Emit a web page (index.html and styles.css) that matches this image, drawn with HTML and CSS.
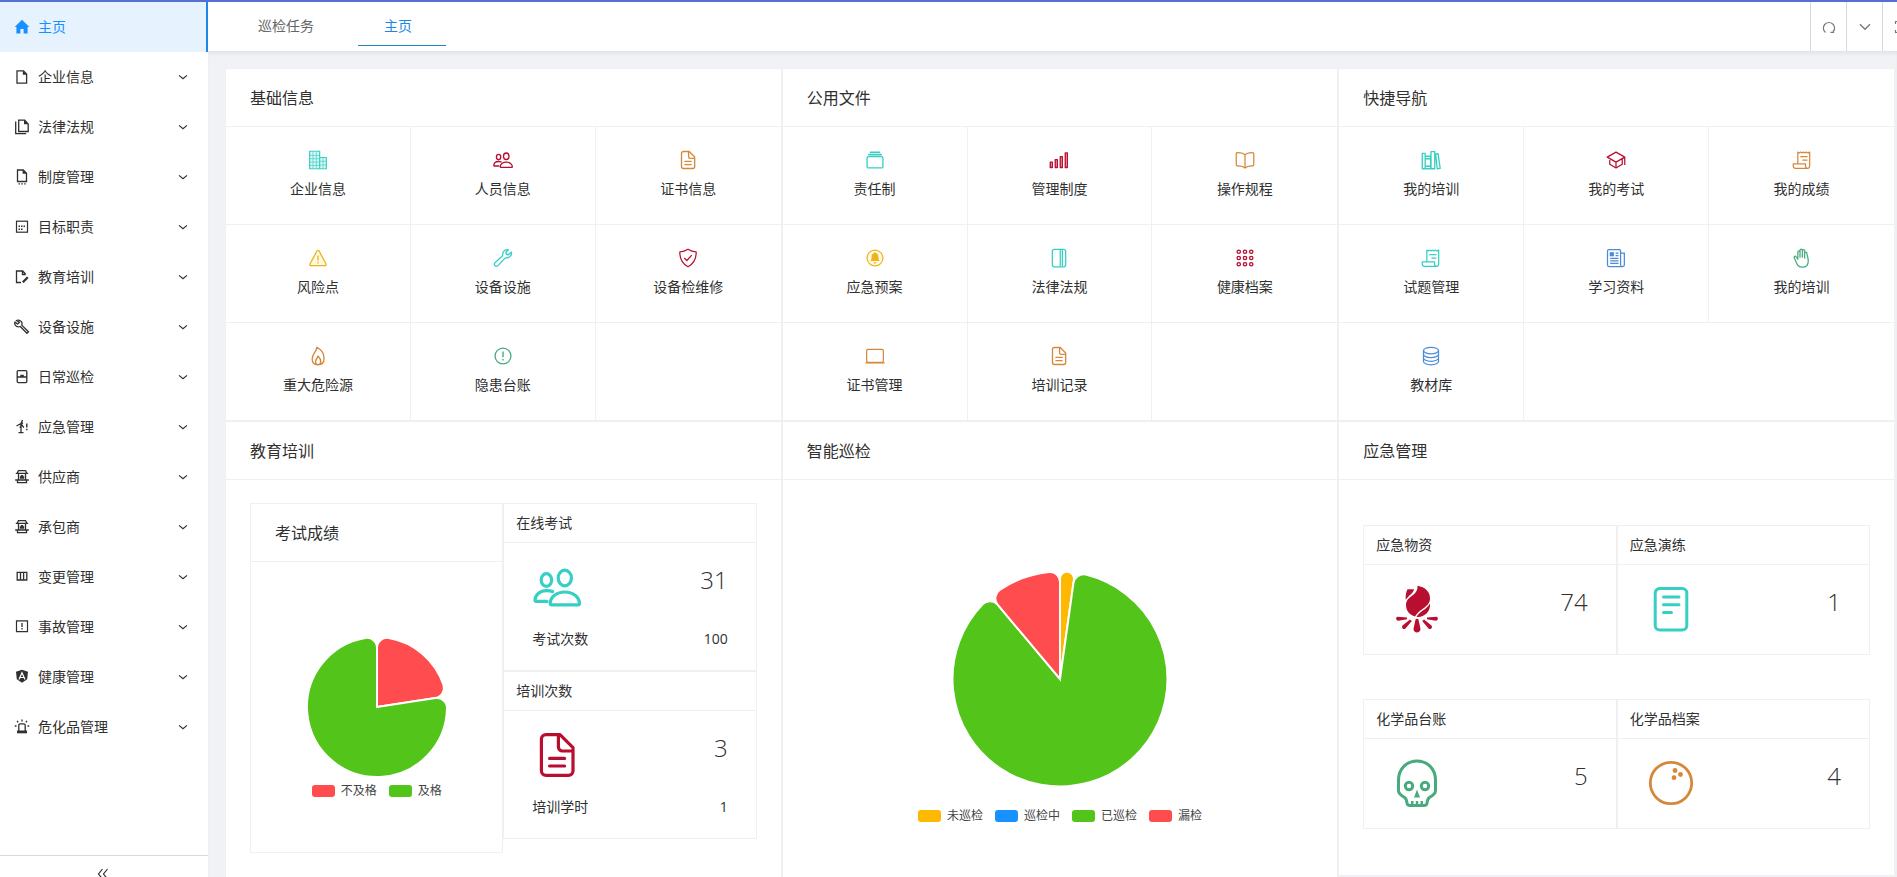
FILE: index.html
```html
<!DOCTYPE html>
<html lang="zh-CN">
<head>
<meta charset="utf-8">
<title>主页</title>
<link rel="stylesheet" href="styles.css">
</head>
<body>
<svg class="sprite" aria-hidden="true">
  <symbol id="chevron" viewBox="0 0 10 10"><path d="M1 3.400l4 3.400 4-3.400" fill="none" stroke="currentColor" stroke-width="1.200"/></symbol>
  <symbol id="file-text" viewBox="0 0 24 24"><path d="M13.500 1.800H6.500A2.300 2.300 0 0 0 4.200 4.100v15.800a2.300 2.300 0 0 0 2.300 2.300h11.200a2.300 2.300 0 0 0 2.300-2.300V8.300zM12.700 2v6a2 2 0 0 0 2 2H20M8.300 13.700h7.500M8.300 17.500h7.500" fill="none" stroke="currentColor" stroke-width="1.600" stroke-linecap="round" stroke-linejoin="round"/></symbol>
  <symbol id="people" viewBox="0 0 24 24"><g fill="none" stroke="currentColor" stroke-width="1.600" stroke-linecap="round" stroke-linejoin="round"><ellipse cx="15.900" cy="7.500" rx="3.300" ry="3.900"/><ellipse cx="6.700" cy="8.500" rx="2.600" ry="3.200"/><path d="M15.900 14.500c-4 0-7.300 2.400-7.300 5.700 0 .4.200.7.700.7h13.200c.5 0 .7-.3.700-.7 0-3.300-3.300-5.700-7.300-5.700z"/><path d="M9.800 14.300c-1-.4-2-.5-3.100-.5-3.100 0-5.500 2-5.700 4.700 0 .4.200.7.600.7h5.400"/></g></symbol>
  <symbol id="receipt" viewBox="0 0 24 24"><path d="M7 16V2.500l1.700 1 1.700-1 1.700 1 1.700-1 1.700 1 1.700-1 1.700 1 2.300-1V19c0 2-1 3-2.500 3s-2.500-1-2.500-3v-2.500H1.500V19c0 2 1 3 2.500 3h14.500M10.500 8h7.500M13 12h5" fill="none" stroke="currentColor" stroke-width="1.500" stroke-linejoin="round" stroke-linecap="round"/></symbol>
  <symbol id="store" viewBox="0 0 16 16"><path d="M4 1.700h8M1.800 4.300h12.400M4.300 1.700l-1 2.600M11.700 1.700l1 2.600M4.500 4.500v6.500M11.500 4.500v6.500M1.200 11h13.600M3.500 11v2.700h9V11" fill="none" stroke="currentColor" stroke-width="1.300"/><path d="M6.800 6h2.400v1.200h1v2.500H5.800V7.200h1z" fill="currentColor"/></symbol>
</svg>

<div class="app">
  <div class="progress"></div>
  <nav class="sidebar" aria-label="主菜单">
    <div class="menu">
      <a class="item active" href="#"><svg viewBox="0 0 16 16"><path d="M8 .8L.7 8h1.700v6.500h4V10h3.200v4.500h4V8h1.700z" fill="currentColor"/></svg><span>主页</span></a>
      <a class="item" href="#"><svg viewBox="0 0 16 16"><path d="M3 1.800h6.500L12.600 5v9.200H3z" fill="none" stroke="currentColor" stroke-width="1.300"/><path d="M8.800 1.500v4.200h4z" fill="currentColor"/></svg><span>企业信息</span><svg class="arrow"><use href="#chevron"/></svg></a>
      <a class="item" href="#"><svg viewBox="0 0 16 16"><path d="M4.700 1.200h6L14.200 5v7.500H4.700zM1.700 2.500v12.200h10.500" fill="none" stroke="currentColor" stroke-width="1.300"/><path d="M10 1v4.300h4.300z" fill="currentColor"/></svg><span>法律法规</span><svg class="arrow"><use href="#chevron"/></svg></a>
      <a class="item" href="#"><svg viewBox="0 0 16 16"><path d="M3.500 1h5.800l3.200 3.200v8.300h-9z" fill="none" stroke="currentColor" stroke-width="1.300"/><path d="M8.600.8v4h4zM4.500 14.200H6v1.300H4.500zM7.300 14.200h1.500v1.300H7.300zM10.200 14.200h1.500v1.300h-1.500z" fill="currentColor"/></svg><span>制度管理</span><svg class="arrow"><use href="#chevron"/></svg></a>
      <a class="item" href="#"><svg viewBox="0 0 16 16"><rect x="2.500" y="2.200" width="11" height="11" fill="none" stroke="currentColor" stroke-width="1.200"/><path d="M4.500 6.500h1.500v1.500H4.500zM7 6.500h1.500v1.500H7zM9.500 6.500h1.500v1.500H9.500zM4.500 9.500h1.500V11H4.500zM7 9.500h1.500V11H7z" fill="currentColor"/></svg><span>目标职责</span><svg class="arrow"><use href="#chevron"/></svg></a>
      <a class="item" href="#"><svg viewBox="0 0 16 16"><path d="M11.500 5L8.700 2H2.500v11.500h4.500M8.500 2v3.500h3.200" fill="none" stroke="currentColor" stroke-width="1.300"/><path d="M8.800 13.300l5-5" stroke="currentColor" stroke-width="2.300"/></svg><span>教育培训</span><svg class="arrow"><use href="#chevron"/></svg></a>
      <a class="item" href="#"><svg viewBox="0 0 16 16"><path d="M2.300 1.500c2-1 4.700-.2 5.500 1.700.4 1 .3 2-.1 2.900l6.800 6.700-1.600 1.500-6.600-6.800c-2 .8-4 .1-5-1.400-.7-1-.7-2.300-.3-3.100L3.600 5 5.500 3.300z" fill="none" stroke="currentColor" stroke-width="1.300" stroke-linejoin="round"/></svg><span>设备设施</span><svg class="arrow"><use href="#chevron"/></svg></a>
      <a class="item" href="#"><svg viewBox="0 0 16 16"><rect x="3.200" y="1.600" width="9.600" height="12" rx="1" fill="none" stroke="currentColor" stroke-width="1.300"/><path d="M3 8h10M6.300 6.500h3.500" stroke="currentColor" stroke-width="1.300"/></svg><span>日常巡检</span><svg class="arrow"><use href="#chevron"/></svg></a>
      <a class="item" href="#"><svg viewBox="0 0 16 16"><path d="M2.500 7L5.500 5.300 9 3.800M8.500 1L7 4.700l2.800 4M7 4.700v9M4.500 13.600h5M5.800 8.700L7 6.700" fill="none" stroke="currentColor" stroke-width="1.300"/><path d="M12.800 4.500v4M12.800 9.700v1.500" stroke="currentColor" stroke-width="1.400"/></svg><span>应急管理</span><svg class="arrow"><use href="#chevron"/></svg></a>
      <a class="item" href="#"><svg><use href="#store"/></svg><span>供应商</span><svg class="arrow"><use href="#chevron"/></svg></a>
      <a class="item" href="#"><svg><use href="#store"/></svg><span>承包商</span><svg class="arrow"><use href="#chevron"/></svg></a>
      <a class="item" href="#"><svg viewBox="0 0 16 16"><path d="M3.200 3.300h9.600v7.700H3.200zM6.500 3.300v7.700M9.600 3.300v7.700" fill="none" stroke="currentColor" stroke-width="1.300"/></svg><span>变更管理</span><svg class="arrow"><use href="#chevron"/></svg></a>
      <a class="item" href="#"><svg viewBox="0 0 16 16"><path d="M2.500 1.900h11v10.800h-11z" fill="none" stroke="currentColor" stroke-width="1.200"/><path d="M8 4v4M8 9v1.500" stroke="currentColor" stroke-width="1.300"/></svg><span>事故管理</span><svg class="arrow"><use href="#chevron"/></svg></a>
      <a class="item" href="#"><svg viewBox="0 0 16 16"><path d="M8 .8l6 2-.8 7.500L8 13.800l-5.200-3.500L2 2.800z" fill="currentColor"/><path d="M5 10.500l3-6.700 3 6.700M6.200 8.500h3.600" fill="none" stroke="#fff" stroke-width="1.200"/></svg><span>健康管理</span><svg class="arrow"><use href="#chevron"/></svg></a>
      <a class="item" href="#"><svg viewBox="0 0 16 16"><path d="M4.800 12V6.300c0-1 .6-1.500 1.500-1.500h3.400c.9 0 1.500.5 1.500 1.500V12M.8 7h1.700M13.500 7h1.700M8 .4v2M3 1.800l1.200 1.500M13 1.800l-1.200 1.500" fill="none" stroke="currentColor" stroke-width="1.300"/><path d="M3 11.500h10v2.800H3z" fill="currentColor"/></svg><span>危化品管理</span><svg class="arrow"><use href="#chevron"/></svg></a>
    </div>
    <button class="collapse" type="button" aria-label="收起菜单"><svg viewBox="0 0 12 12"><path d="M5.500 1L1.500 6l4 5M10.500 1l-4 5 4 5" fill="none" stroke="currentColor" stroke-width="1.200"/></svg></button>
  </nav>

  <div class="main">
    <header class="topbar">
      <div class="tabs">
        <a class="tab" href="#">巡检任务</a>
        <a class="tab current" href="#">主页</a>
      </div>
      <div class="tools">
        <button type="button" aria-label="刷新"><svg viewBox="0 0 14 14"><path d="M3.500 12.500A5.600 5.600 0 1 1 11 12M8.500 12.300h3V10" fill="none" stroke="currentColor" stroke-width="1.200"/></svg></button>
        <button type="button" aria-label="更多"><svg viewBox="0 0 14 14"><path d="M2 4.300l5 5 5-5" fill="none" stroke="currentColor" stroke-width="1.300"/></svg></button>
        <button type="button" aria-label="全屏"><svg viewBox="0 0 14 14"><path d="M4 1.500H1.500V4M10 1.500h2.500V4M1.500 10v2.500H4M12.500 10v2.500H10M4 4h6v6H4z" fill="none" stroke="currentColor" stroke-width="1.200"/></svg></button>
      </div>
    </header>

    <main class="board">
      <section class="card">
        <h2>基础信息</h2>
        <div class="grid">
          <a class="cell" href="#"><svg class="teal" viewBox="0 0 24 24"><path d="M2 1.500h12v21H2zM14 9h8v13.500h-8" fill="#dcf8f5" stroke="currentColor" stroke-width="1.400"/><path d="M6 2v20M10 2v20M2 6.500h12M2 10.500h12M2 14.500h12M2 18.500h12M18 9v13M14 13.500h8M14 18h8" fill="none" stroke="currentColor" stroke-width=".8"/></svg><span>企业信息</span></a>
          <a class="cell" href="#"><svg class="red"><use href="#people"/></svg><span>人员信息</span></a>
          <a class="cell" href="#"><svg class="orange"><use href="#file-text"/></svg><span>证书信息</span></a>
          <a class="cell" href="#"><svg class="yellow" viewBox="0 0 24 24"><path d="M12 2.800c.6 0 1 .3 1.300.8l8.300 15.600c.5 1 0 2-1.200 2H3.600c-1.200 0-1.700-1-1.200-2l8.300-15.600c.3-.5.7-.8 1.300-.8z" fill="#fffbe0" stroke="currentColor" stroke-width="1.600"/><path d="M12 9v6M12 16.500v2" stroke="currentColor" stroke-width="1.600"/></svg><span>风险点</span></a>
          <a class="cell" href="#"><svg class="teal" viewBox="0 0 24 24"><path d="M18.500 2.200c-2.800-1-6.500.8-6.800 4.600-.1 1.500.2 2-.8 3.100L2.700 17.300c-1.300 1.200-1.500 2.700-.3 3.900 1.100 1.200 2.700 1 3.900-.3l7.400-8.200c1-1.100 1.500-.9 3-.9 4 0 6.300-3.700 5.300-6.900l-3.300 3.200-2.700-.6-.6-2.500z" fill="none" stroke="currentColor" stroke-width="1.600" stroke-linejoin="round"/></svg><span>设备设施</span></a>
          <a class="cell" href="#"><svg class="red" viewBox="0 0 24 24"><path d="M12 1.500c3 2 6 3 9.800 3.200C22 13 19.500 18.500 12 22.500 4.500 18.500 2 13 2.200 4.700 6 4.500 9 3.500 12 1.500z" fill="none" stroke="currentColor" stroke-width="1.500" stroke-linejoin="round"/><path d="M7.500 12l3.200 3 5.800-6.500" fill="none" stroke="currentColor" stroke-width="1.500"/></svg><span>设备检维修</span></a>
          <a class="cell" href="#"><svg class="orange" viewBox="0 0 24 24"><path d="M10.500 1.500c.5 4.500-5.500 8-5.500 14 0 4.500 2.800 7 7 7s7.300-2.500 7.300-7.300C19.300 9 15.500 4 10.500 1.500zM12 12c.3 2-3 3.500-3 6.800 0 2 1 3.700 3 3.700s3.300-1.700 3.300-3.700c0-3.300-1.800-5.300-3.300-6.800z" fill="none" stroke="currentColor" stroke-width="1.600" stroke-linejoin="round"/></svg><span>重大危险源</span></a>
          <a class="cell" href="#"><svg class="green" viewBox="0 0 24 24"><circle cx="12" cy="12" r="9.500" fill="none" stroke="currentColor" stroke-width="1.600"/><path d="M12 6.500v7M12 15.500v2" stroke="currentColor" stroke-width="1.700"/></svg><span>隐患台账</span></a>
          <div class="cell"></div>
        </div>
      </section>

      <section class="card">
        <h2>公用文件</h2>
        <div class="grid">
          <a class="cell" href="#"><svg class="teal" viewBox="0 0 24 24"><rect x="2.500" y="8" width="19" height="13.500" rx="1.800" fill="none" stroke="currentColor" stroke-width="1.600"/><path d="M4.500 5.500h15M6.500 2.700h11" stroke="currentColor" stroke-width="1.900" stroke-linecap="round"/></svg><span>责任制</span></a>
          <a class="cell" href="#"><svg class="red" viewBox="0 0 24 24"><path d="M1.500 14.500h2.500v6.500H1.500zM7.500 11.500h2.500V21H7.500zM13.500 8h2.500v13h-2.500zM19.500 3.500H22V21h-2.500z" fill="#f7b6c4" stroke="currentColor" stroke-width="1.600" stroke-linejoin="round"/></svg><span>管理制度</span></a>
          <a class="cell" href="#"><svg class="orange" viewBox="0 0 24 24"><path d="M12 6c-1.500-2.200-4-3-8.800-3-1 0-1.700.4-1.700 1.300v13.500c0 .8.600 1.200 1.500 1.200 5 0 7.500.7 9 2.700 1.500-2 4-2.700 9-2.700.9 0 1.500-.4 1.500-1.200V4.300c0-.9-.7-1.300-1.700-1.300C16 3 13.500 3.800 12 6zv15.700" fill="none" stroke="currentColor" stroke-width="1.500" stroke-linejoin="round"/></svg><span>操作规程</span></a>
          <a class="cell" href="#"><svg class="yellow" viewBox="0 0 24 24"><circle cx="12" cy="12" r="9.500" fill="#fffbe0" stroke="currentColor" stroke-width="1.500"/><path d="M12 5c.7 0 1 .4 1.100 1 2.200.6 3 2.400 3 4.500 0 3 .6 3.800 1.500 5.200H6.400c.9-1.400 1.500-2.200 1.500-5.200 0-2.100.8-3.900 3-4.500.1-.6.400-1 1.100-1zM10.300 17h3.400c0 2-3.400 2-3.400 0z" fill="currentColor"/></svg><span>应急预案</span></a>
          <a class="cell" href="#"><svg class="teal" viewBox="0 0 24 24"><rect x="4" y="1.500" width="16" height="21" rx="2.500" fill="none" stroke="currentColor" stroke-width="1.500"/><path d="M13.500 2v20M16 2v20" stroke="currentColor" stroke-width="1.500"/></svg><span>法律法规</span></a>
          <a class="cell" href="#"><svg class="red" viewBox="0 0 24 24"><g fill="none" stroke="currentColor" stroke-width="1.600"><circle cx="4.500" cy="4.500" r="2"/><circle cx="12" cy="4.500" r="2"/><circle cx="19.500" cy="4.500" r="2"/><circle cx="4.500" cy="12" r="2"/><circle cx="12" cy="12" r="2"/><circle cx="19.500" cy="12" r="2"/><circle cx="4.500" cy="19.500" r="2"/><circle cx="12" cy="19.500" r="2"/><circle cx="19.500" cy="19.500" r="2"/></g></svg><span>健康档案</span></a>
          <a class="cell" href="#"><svg class="orange" viewBox="0 0 24 24"><rect x="2" y="4" width="20" height="15.500" rx="1.800" fill="none" stroke="currentColor" stroke-width="1.500"/><path d="M.5 20.200h23" stroke="currentColor" stroke-width="1.700"/></svg><span>证书管理</span></a>
          <a class="cell" href="#"><svg class="orange"><use href="#file-text"/></svg><span>培训记录</span></a>
          <div class="cell"></div>
        </div>
      </section>

      <section class="card">
        <h2>快捷导航</h2>
        <div class="grid">
          <a class="cell" href="#"><svg class="teal" viewBox="0 0 24 24"><path d="M1.500 4h3.500v18.500H1.500zM5 7.500h6.500v15H5zM5 10.500h6.500M5 19.500h6.500M12 2h4.500v20.500H12zM17.500 5l3-.5 2.500 17.500-3.500.5z" fill="none" stroke="currentColor" stroke-width="1.600" stroke-linejoin="round"/></svg><span>我的培训</span></a>
          <a class="cell" href="#"><svg class="red" viewBox="0 0 24 24"><path d="M12 2.500L1.500 8.500 12 14.500l10.500-6zM4.500 10.500v6.500L12 21.500l7.500-4.500v-6.500M22.500 8.500V18M12 14.500v7" fill="none" stroke="currentColor" stroke-width="1.500" stroke-linejoin="round"/></svg><span>我的考试</span></a>
          <a class="cell" href="#"><svg class="orange"><use href="#receipt"/></svg><span>我的成绩</span></a>
          <a class="cell" href="#"><svg class="teal"><use href="#receipt"/></svg><span>试题管理</span></a>
          <a class="cell" href="#"><svg class="blue" viewBox="0 0 24 24"><path d="M17.500 20V3.500c0-1-.5-1.700-1.500-1.700H3.300c-1 0-1.500.7-1.500 1.700v17c0 1 .7 1.700 1.700 1.700h16.200c1.300 0 2.300-.8 2.300-2.200V6h-4.500M17.500 20c0 1.300.8 2.200 2.200 2.200M11.500 6H15M11.500 9H15M5 12.500h10M5 15.500h10M5 18.500h10" fill="none" stroke="currentColor" stroke-width="1.500"/><path d="M4.500 5h5v5h-5z" fill="currentColor"/></svg><span>学习资料</span></a>
          <a class="cell" href="#"><svg class="green" viewBox="0 0 24 24"><path d="M7 13.500V5c0-2 2.600-2 2.600 0v6V3c0-2.200 2.800-2.200 2.800 0v8V3.500c0-2.200 2.800-2.200 2.800 0V12 6.500c0-2 2.700-2 2.700 0 .2 3 1.600 5 1.600 9 0 4.500-2.500 7.500-7 7.500-5 0-6-2.500-7.500-6L2.800 11.800c-.7-2 1.300-2.800 2.200-1.300z" fill="none" stroke="currentColor" stroke-width="1.500" stroke-linejoin="round"/></svg><span>我的培训</span></a>
          <a class="cell" href="#"><svg class="blue" viewBox="0 0 24 24"><g fill="none" stroke="currentColor" stroke-width="1.500"><ellipse cx="12" cy="5.500" rx="9" ry="4"/><path d="M3 5.500v13c0 2.200 4 4 9 4s9-1.800 9-4v-13M3 10c0 2.200 4 4 9 4s9-1.800 9-4M3 14.300c0 2.200 4 4 9 4s9-1.800 9-4"/></g></svg><span>教材库</span></a>
          <div class="cell rest"></div>
        </div>
      </section>

      <section class="card">
        <h2>教育培训</h2>
        <div class="training">
          <section class="card">
            <h2>考试成绩</h2>
            <div class="chart score">
              <svg class="pie-small" viewBox="-72 -72 144 144" role="img" aria-label="考试成绩">
                <path class="f-red" d="M0 0V-59.160A10 10 0 0 1 11.670 -69.020A70 70 0 0 1 66.460 -21.980A10 10 0 0 1 58.480 -8.960Z"/>
                <path class="f-green" d="M0 0L58.480 -8.960A10 10 0 0 1 69.990 1.080A70 70 0 1 1 -11.670 -69.020A10 10 0 0 1 0 -59.160Z"/>
              </svg>
              <ul class="legend"><li class="l-red">不及格</li><li class="l-green">及格</li></ul>
            </div>
          </section>
          <div class="stack">
            <section class="stat">
              <h3>在线考试</h3>
              <div class="figure"><svg class="teal"><use href="#people"/></svg><strong>31</strong></div>
              <div class="detail"><span>考试次数</span><span>100</span></div>
            </section>
            <section class="stat">
              <h3>培训次数</h3>
              <div class="figure"><svg class="red"><use href="#file-text"/></svg><strong>3</strong></div>
              <div class="detail"><span>培训学时</span><span>1</span></div>
            </section>
          </div>
        </div>
      </section>

      <section class="card">
        <h2>智能巡检</h2>
        <div class="chart patrol">
          <svg class="pie-large" viewBox="-110 -110 220 220" role="img" aria-label="智能巡检">
            <path class="f-yellow" d="M0 0V-100.260A7 7 0 0 1 7.500 -107.240A7 7 0 0 1 13.950 -99.280Z"/>
            <path class="f-green" d="M0 0L13.500 -96.050A10 10 0 0 1 25.800 -104.360A107.500 107.500 0 1 1 -77.180 -74.830A10 10 0 0 1 -62.340 -74.300Z"/>
            <path class="f-red" d="M0 0L-62.340 -74.300A10 10 0 0 1 -60.290 -89A107.500 107.500 0 0 1 -11.030 -106.930A10 10 0 0 1 0 -96.990Z"/>
          </svg>
          <ul class="legend"><li class="l-yellow">未巡检</li><li class="l-blue">巡检中</li><li class="l-green">已巡检</li><li class="l-red">漏检</li></ul>
        </div>
      </section>

      <section class="card">
        <h2>应急管理</h2>
        <div class="emergency">
          <section class="stat">
            <h3>应急物资</h3>
            <div class="figure"><svg class="red" viewBox="0 0 48 48"><path d="M24.500.8C32 2 37.500 7 37 14c-.4 5-3.500 7-7.500 10-3 2.200-5.500 4-7.500 7.500-5.500-1.500-9-6-9-11.500 0-5 3.500-7.500 7-10 3-2.200 4.800-5 4.500-9.200zM14.500 4.300h6.500c-.3 3.500-5 6-8.300 10.500-.3-4 .3-7.500 1.800-10.500zM37 18.500c.7 7.500-4.500 13.200-12 13.500h-1.500c3-5.800 10.300-7.500 13.500-13.500z" fill="currentColor"/><path d="M4.500 31.800l9.500.6v1.800l-8.700 1.500c-2.500 0-3-3.500-.8-3.900zM43.500 31.800l-9.500.6v1.800l8.700 1.500c2.500 0 3-3.500.8-3.900zM17 34.500l1.800 1.500-6.300 7.500c-2 1.800-4.500-.8-3-2.900zM31 34.500L29.200 36l6.300 7.500c2 1.800 4.500-.8 3-2.900zM22.500 34.500c.5-1 2.500-1 3 0l2 9.500c0 4.500-7 4.500-7 0z" fill="currentColor"/></svg><strong>74</strong></div>
          </section>
          <section class="stat">
            <h3>应急演练</h3>
            <div class="figure"><svg class="teal" viewBox="0 0 48 48"><rect x="8.200" y="3.500" width="31.600" height="41.500" rx="4.500" fill="none" stroke="currentColor" stroke-width="3"/><path d="M16.500 12h15.500M16.500 19.700h15.500M16.500 27.500h8" stroke="currentColor" stroke-width="3" stroke-linecap="round"/></svg><strong>1</strong></div>
          </section>
          <section class="stat">
            <h3>化学品台账</h3>
            <div class="figure"><svg class="green" viewBox="0 0 48 48"><path d="M24 2C13.500 2 5.500 10 5.500 21v10.500c0 3.500 3 5 5.500 6.500 2.500 1.300 2.700 3.300 3 6 .1 1.500 1.200 2.500 3 2.500h14c1.800 0 2.900-1 3-2.500.3-2.700.5-4.700 3-6 2.500-1.500 5.500-3 5.500-6.500V21C42.500 10 34.500 2 24 2z" fill="none" stroke="currentColor" stroke-width="3" stroke-linejoin="round"/><circle cx="16" cy="27" r="3.700" fill="none" stroke="currentColor" stroke-width="3"/><circle cx="32" cy="27" r="3.700" fill="none" stroke="currentColor" stroke-width="3"/><path d="M24 30.500l3 8h-6zM18 42h2.500v5H18zM22.800 42h2.400v5h-2.400zM27.500 42H30v5h-2.500z" fill="currentColor"/></svg><strong>5</strong></div>
          </section>
          <section class="stat">
            <h3>化学品档案</h3>
            <div class="figure"><svg class="orange" viewBox="0 0 48 48"><circle cx="24" cy="24" r="20.700" fill="none" stroke="currentColor" stroke-width="2.800"/><circle cx="28" cy="11.500" r="2.400" fill="currentColor"/><circle cx="33.500" cy="15.500" r="2.400" fill="currentColor"/><circle cx="27" cy="18.700" r="2.400" fill="currentColor"/></svg><strong>4</strong></div>
          </section>
        </div>
      </section>
    </main>
  </div>
</div>
</body>
</html>
```
FILE: styles.css
```css
* { box-sizing: border-box; }
body {
  margin: 0;
  background: #f0f2f5;
  color: #303030;
  font: 14px/22px "Open Sans", "Noto Sans CJK SC", sans-serif;
}
a { color: inherit; text-decoration: none; }
button { border: 0; padding: 0; background: none; color: inherit; cursor: pointer; }
h2, h3, ul { margin: 0; padding: 0; font-weight: 400; }
ul { list-style: none; }
.sprite { display: none; }

.app {
  display: grid;
  grid-template: 2px minmax(0, 1fr) / 208px minmax(0, 1fr);
  height: 100vh;
  overflow: hidden;
}
.progress { grid-column: 1 / -1; background: #5570cf; }

/* sidebar */
.sidebar { display: flex; flex-direction: column; background: #fff; min-height: 0; }
.menu { flex: 1; min-height: 0; overflow: hidden; }
.item { display: flex; align-items: center; gap: 8px; height: 50px; padding: 0 20px 0 14px; }
.item svg { width: 16px; height: 16px; flex: none; }
.item .arrow { width: 10px; height: 10px; margin-left: auto; }
.active { background: #e6f3ff; color: #1890ff; border-right: 2px solid #1b87e6; }
.collapse {
  display: flex; justify-content: center;
  height: 22px; padding: 12px 3px 0 0;
  border-top: 1px solid #d9d9d9;
}
.collapse svg { width: 12px; height: 12px; }

/* top bar */
.main { display: flex; flex-direction: column; min-height: 0; }
.topbar {
  display: flex; justify-content: space-between; flex: none;
  height: 49px; overflow: hidden;
  background: #fff;
}
.tabs { display: flex; gap: 14px; padding-left: 20px; }
.tab { height: 44px; padding: 13px 30px 0; color: #666; }
.current { padding: 13px 34px 0 26px; color: #1b87e6; border-bottom: 1px solid #1b87c6; }
.tools { display: flex; margin-right: -21px; color: #777; }
.tools button {
  display: flex; align-items: center; justify-content: center;
  width: 36px; border-left: 1px solid #d9d9d9;
}
.tools svg { width: 14px; height: 14px; }

/* dashboard */
.board {
  display: grid; flex: 1; min-height: 0;
  grid-template-columns: repeat(3, minmax(0, 1fr));
  align-content: start; align-items: start;
  padding: 17px 2px 0 17px;
  overflow: hidden;
  box-shadow: inset 0 4px 4px -2px #dde0e6;
}
.card { background: #fff; border: 1px solid #f0f0f0; }
.board > .card:nth-child(-n+3) { border-bottom: 0; }
.card > h2 { padding: 17px 24px 16px; font-size: 16px; line-height: 24px; border-bottom: 1px solid #f0f0f0; }

.grid { display: grid; grid-template-columns: repeat(3, minmax(0, 1fr)); }
.cell {
  display: flex; flex-direction: column; align-items: center; gap: 8px;
  min-height: 98px; padding-top: 23px;
  border-right: 1px solid #f0f0f0; border-bottom: 1px solid #f0f0f0;
}
.cell:nth-child(3n), .rest { border-right: 0; }
.rest { grid-column: span 2; }
.cell svg { width: 20px; height: 20px; }

.teal { color: #36cfc4; }
.red { color: #b80f30; }
.orange { color: #d6883a; }
.yellow { color: #efb321; }
.green { color: #47ab7e; }
.blue { color: #4a8bdc; }

.training {
  display: grid; grid-template-columns: repeat(2, minmax(0, 1fr)); align-items: start;
  padding: 23px 24px 24px;
}
.stat { background: #fff; border: 1px solid #f0f0f0; padding-bottom: 20px; }
.stat h3 { padding: 8px 12px; font-size: 14px; border-bottom: 1px solid #f0f0f0; }
.figure { display: flex; justify-content: space-between; padding: 20px 28px 0 29px; }
.figure svg { width: 48px; height: 48px; }
.figure strong { font-size: 24px; line-height: 34px; font-weight: 300; }
.detail { display: flex; justify-content: space-between; padding: 17px 28px 0; }

.emergency {
  display: grid; grid-template-columns: repeat(2, minmax(0, 1fr)); row-gap: 44px;
  padding: 45px 24px 46px;
}
.emergency .stat { padding-bottom: 21px; }

/* charts */
.chart { display: flex; flex-direction: column; align-items: center; }
.score { padding: 73px 0 52px; }
.patrol { padding: 89px 0 60px; }
.pie-small { width: 144px; height: 144px; }
.pie-large { width: 220px; height: 220px; }
.chart path { stroke: #fff; stroke-width: 2; }
.f-red { fill: #ff4d4f; }
.f-green { fill: #52c41a; }
.f-yellow { fill: #ffb800; }
.legend { display: flex; gap: 12px; font-size: 12px; line-height: 18px; color: #444; }
.score .legend { margin-top: 3px; }
.patrol .legend { margin-top: 18px; }
.legend li { display: flex; align-items: center; gap: 6px; }
.legend li::before { content: ""; width: 23px; height: 12px; border-radius: 3px; background: currentColor; }
.l-red::before { color: #ff4d4f; }
.l-green::before { color: #52c41a; }
.l-yellow::before { color: #ffb800; }
.l-blue::before { color: #1890ff; }
```
